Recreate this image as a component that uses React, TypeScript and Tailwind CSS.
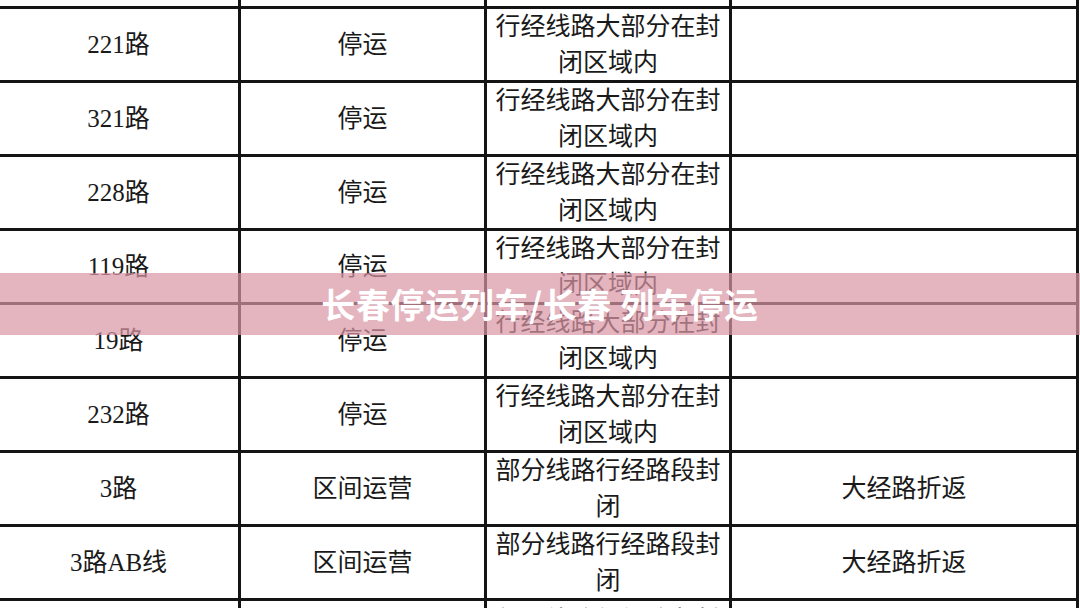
import { Fragment } from "react";

const rows = [
  { route: "221路", status: "停运", reason: ["行经线路大部分在封", "闭区域内"], note: "" },
  { route: "321路", status: "停运", reason: ["行经线路大部分在封", "闭区域内"], note: "" },
  { route: "228路", status: "停运", reason: ["行经线路大部分在封", "闭区域内"], note: "" },
  { route: "119路", status: "停运", reason: ["行经线路大部分在封", "闭区域内"], note: "" },
  { route: "19路", status: "停运", reason: ["行经线路大部分在封", "闭区域内"], note: "" },
  { route: "232路", status: "停运", reason: ["行经线路大部分在封", "闭区域内"], note: "" },
  { route: "3路", status: "区间运营", reason: ["部分线路行经路段封", "闭"], note: "大经路折返" },
  { route: "3路AB线", status: "区间运营", reason: ["部分线路行经路段封", "闭"], note: "大经路折返" },
];

const font = { fontFamily: '"Liberation Serif", "Noto Sans CJK SC", serif' };

export default function App() {
  return (
    <div className="relative w-[1080px] h-[608px] overflow-hidden bg-white">
      {/* table grid, the gaps on black make the rules */}
      <div
        className="ml-[-4px] w-[1083px] grid grid-cols-[239px_243px_242px_344px] grid-rows-[6px_repeat(8,71px)_40px] gap-[3px] bg-[#141414] px-[3px] text-[25px] text-[#1a1a1a]"
        style={font}
      >
        <div className="bg-white" />
        <div className="bg-white" />
        <div className="bg-white" />
        <div className="bg-white" />
        {rows.map((r) => (
          <Fragment key={r.route}>
            <div className="bg-white flex items-center justify-center">{r.route}</div>
            <div className="bg-white flex items-center justify-center">{r.status}</div>
            <div className="bg-white flex flex-col items-center justify-center leading-[36px]">
              {r.reason.map((l) => (
                <span key={l}>{l}</span>
              ))}
            </div>
            <div className="bg-white flex items-center justify-center">{r.note}</div>
          </Fragment>
        ))}
        <div className="bg-white" />
        <div className="bg-white" />
        <div className="bg-white flex justify-center pt-[2px] leading-[36px]">部分线路行经路段封</div>
        <div className="bg-white" />
      </div>

      {/* title banner */}
      <div className="absolute left-0 top-[273px] w-full h-[62px] bg-[rgba(217,149,165,0.71)] flex items-center justify-center">
        <span
          className="text-white text-[34px] font-bold tracking-[0.6px] leading-none"
          style={{ fontFamily: '"Noto Sans CJK SC", "Noto Sans", sans-serif' }}
        >
          长春停运列车/长春 列车停运
        </span>
      </div>
    </div>
  );
}
